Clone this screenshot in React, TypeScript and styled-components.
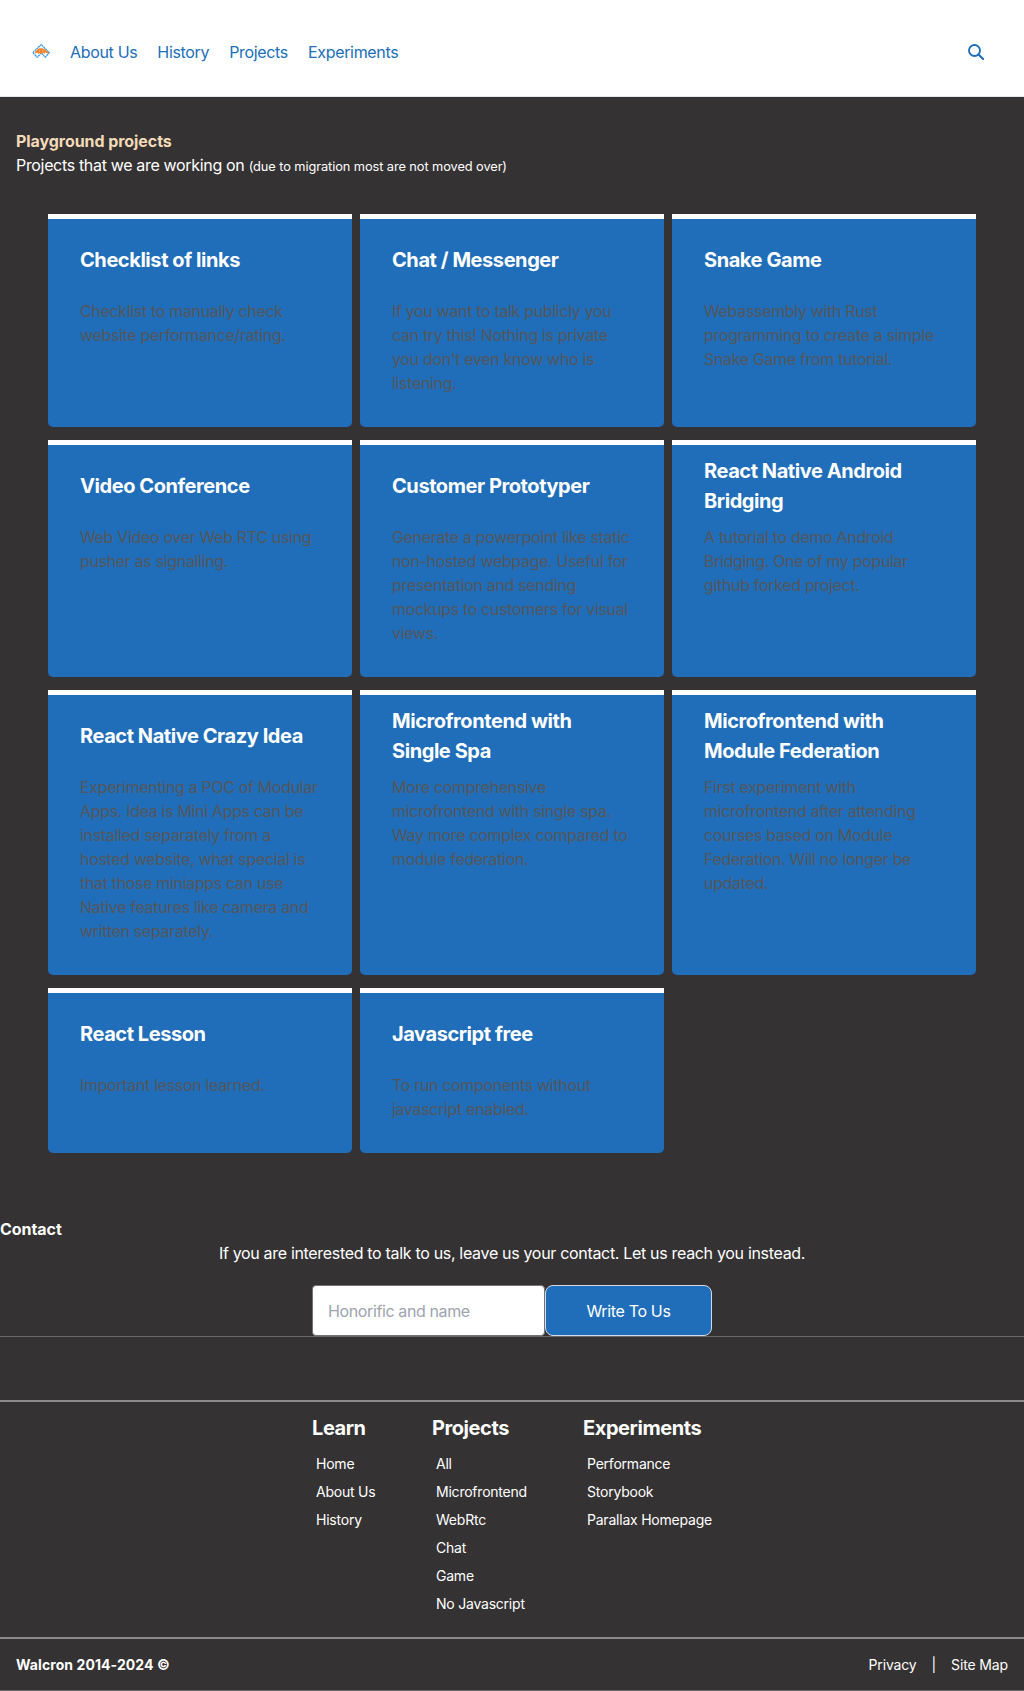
import React from 'react';
import styled, { createGlobalStyle } from 'styled-components';

const blue = '#206eb9';
const dark = '#353233';

const GlobalStyle = createGlobalStyle`
  *, *::before, *::after { box-sizing: border-box; }
  body {
    margin: 0;
    background: ${dark};
    color: #fff;
    font: 400 16px/24px Inter, 'Liberation Sans', sans-serif;
    letter-spacing: -0.33px;
  }
  h1, h2, h3, p, ul { margin: 0; padding: 0; }
  ul { list-style: none; }
  a { color: inherit; text-decoration: none; }
`;

const Header = styled.header`
  display: flex;
  align-items: center;
  justify-content: space-between;
  height: 97px;
  padding: 8px 40px 0 32px;
  background: #fff;
  border-bottom: 1px solid #e2e8ec;
  color: ${blue};
`;

const Nav = styled.nav`
  display: flex;
  align-items: center;
  gap: 20px;
`;

const Logo = styled.svg`
  display: block;
  width: 18px;
  height: 18px;
`;

const SearchButton = styled.button`
  display: flex;
  padding: 0;
  border: 0;
  background: none;
  color: inherit;
`;

const Intro = styled.section`
  padding: 32px 16px 37px;
`;

const IntroTitle = styled.h1`
  font-size: 16px;
  line-height: 24px;
  font-weight: 700;
  letter-spacing: -0.06px;
  color: #f3dab9;
`;

const IntroText = styled.p`
  height: 24px;
`;

const Small = styled.small`
  font-size: 12.8px;
  line-height: 1;
  letter-spacing: -0.08px;
`;

const Grid = styled.section`
  display: grid;
  grid-template-columns: repeat(3, 304px);
  gap: 13px 8px;
  padding: 0 48px;
`;

const Card = styled.article`
  padding: 0 32px 32px;
  border-top: 5px solid #fff;
  border-radius: 0 0 5px 5px;
  background: ${blue};
`;

const CardTitle = styled.h2`
  display: flex;
  align-items: center;
  height: 80px;
  padding-top: 2px;
  font-size: 20px;
  line-height: 30px;
  font-weight: 700;
  letter-spacing: -0.43px;
`;

const CardText = styled.p`
  color: #55565a;
`;

const Line = styled.span`
  display: block;
  white-space: nowrap;
`;

const Contact = styled.section`
  margin-top: 64px;
  border-bottom: 1px solid #6b6869;
`;

const ContactTitle = styled.h2`
  font-size: 16px;
  line-height: 24px;
  font-weight: 700;
  letter-spacing: -0.06px;
`;

const ContactText = styled.p`
  text-align: center;
  letter-spacing: -0.32px;
`;

const Form = styled.form`
  display: flex;
  align-items: flex-start;
  justify-content: center;
  padding-top: 20px;
`;

const NameInput = styled.input`
  width: 233px;
  height: 51px;
  padding: 0 15px;
  border: 1px solid #737375;
  border-radius: 4px;
  background: #fff;
  font: inherit;
  letter-spacing: -0.38px;
  &::placeholder { color: #9da3af; opacity: 1; }
`;

const SubmitButton = styled.button`
  width: 167px;
  height: 51px;
  padding: 0;
  border: 1px solid #d2dce8;
  border-radius: 8px;
  background: ${blue};
  color: #fff;
  font: inherit;
  letter-spacing: -0.34px;
`;

const Footer = styled.footer`
  margin-top: 63px;
  border-top: 2px solid #8c898a;
`;

const Columns = styled.div`
  display: grid;
  grid-template-columns: 120px 151px 132px;
  padding: 11px 0 19px 312px;
`;

const ColumnTitle = styled.h3`
  font-size: 20px;
  line-height: 30px;
  font-weight: 700;
  letter-spacing: -0.43px;
`;

const Links = styled.ul`
  padding: 7px 0 0 4px;
  font-size: 14px;
  line-height: 28px;
  letter-spacing: -0.22px;
`;

const Bottom = styled.div`
  display: flex;
  justify-content: space-between;
  height: 54px;
  padding: 14px 16px 0;
  border-top: 2px solid #8c898a;
  border-bottom: 1px solid #6b6869;
  font-size: 14px;
`;

const Copyright = styled.strong`
  font-weight: 700;
  letter-spacing: 0.08px;
`;

const Legal = styled.div`
  display: flex;
  gap: 15px;
  letter-spacing: -0.14px;
`;

const cards: { title: string[]; text: string[] }[] = [
  { title: ['Checklist of links'], text: ['Checklist to manually check', 'website performance/rating.'] },
  { title: ['Chat / Messenger'], text: ['If you want to talk publicly you', 'can try this! Nothing is private', "you don't even know who is", 'listening.'] },
  { title: ['Snake Game'], text: ['Webassembly with Rust', 'programming to create a simple', 'Snake Game from tutorial.'] },
  { title: ['Video Conference'], text: ['Web Video over Web RTC using', 'pusher as signalling.'] },
  { title: ['Customer Prototyper'], text: ['Generate a powerpoint like static', 'non-hosted webpage. Useful for', 'presentation and sending', 'mockups to customers for visual', 'views.'] },
  { title: ['React Native Android', 'Bridging'], text: ['A tutorial to demo Android', 'Bridging. One of my popular', 'github forked project.'] },
  { title: ['React Native Crazy Idea'], text: ['Experimenting a POC of Modular', 'Apps. Idea is Mini Apps can be', 'installed separately from a', 'hosted website, what special is', 'that those miniapps can use', 'Native features like camera and', 'written separately.'] },
  { title: ['Microfrontend with', 'Single Spa'], text: ['More comprehensive', 'microfrontend with single spa.', 'Way more complex compared to', 'module federation.'] },
  { title: ['Microfrontend with', 'Module Federation'], text: ['First experiment with', 'microfrontend after attending', 'courses based on Module', 'Federation. Will no longer be', 'updated.'] },
  { title: ['React Lesson'], text: ['Important lesson learned.'] },
  { title: ['Javascript free'], text: ['To run components without', 'javascript enabled.'] },
];

const columns = [
  { title: 'Learn', links: ['Home', 'About Us', 'History'] },
  { title: 'Projects', links: ['All', 'Microfrontend', 'WebRtc', 'Chat', 'Game', 'No Javascript'] },
  { title: 'Experiments', links: ['Performance', 'Storybook', 'Parallax Homepage'] },
];

const Lines = ({ items }: { items: string[] }) => (
  <>{items.map((line) => <Line key={line}>{line} </Line>)}</>
);

export default function App() {
  return (
    <>
      <GlobalStyle />
      <Header>
        <Nav>
          <Logo viewBox="0 0 18 18" fill="none">
            <path d="M.8 9.6 9.2 1.6l8 8-3.9 4.7-4.1-4.4-4 4.4L1 9.8" stroke="#369ced" strokeWidth="1.3" strokeDasharray="2 .5" />
            <path d="M2.6 9.4C4.5 7.6 5.4 5.4 8 5.2c2.7-.2 4.2.3 5.4 1.6 1 1 2.3 2.4 4.5 2.9l-3 .5-1.8-1-.8 1.8-1.7-1.4-1.8 1.3-1.2-1-1.5 1.2-.5-1.6-2 1z" fill="#fb8428" />
            <path d="M8 7.3 7.2 9M10.6 6.8l.4 1.6" stroke="#ffe2c6" strokeWidth=".5" />
          </Logo>
          {['About Us', 'History', 'Projects', 'Experiments'].map((item) => <a key={item} href="#">{item}</a>)}
        </Nav>
        <SearchButton aria-label="Search">
          <svg width="16" height="16" viewBox="0 0 16 16" fill="none" stroke="currentColor">
            <circle cx="6.5" cy="6.5" r="5.5" strokeWidth="1.9" />
            <path d="m10.5 10.5 4.6 4.6" strokeWidth="2.1" strokeLinecap="round" />
          </svg>
        </SearchButton>
      </Header>

      <Intro>
        <IntroTitle>Playground projects</IntroTitle>
        <IntroText>Projects that we are working on <Small>(due to migration most are not moved over)</Small></IntroText>
      </Intro>

      <Grid>
        {cards.map((card) => (
          <Card key={card.title.join(' ')}>
            <CardTitle><span><Lines items={card.title} /></span></CardTitle>
            <CardText><Lines items={card.text} /></CardText>
          </Card>
        ))}
      </Grid>

      <Contact>
        <ContactTitle>Contact</ContactTitle>
        <ContactText>If you are interested to talk to us, leave us your contact. Let us reach you instead.</ContactText>
        <Form>
          <NameInput placeholder="Honorific and name" />
          <SubmitButton type="button">Write To Us</SubmitButton>
        </Form>
      </Contact>

      <Footer>
        <Columns>
          {columns.map((column) => (
            <div key={column.title}>
              <ColumnTitle>{column.title}</ColumnTitle>
              <Links>{column.links.map((link) => <li key={link}><a href="#">{link}</a></li>)}</Links>
            </div>
          ))}
        </Columns>
        <Bottom>
          <Copyright>Walcron 2014-2024 ©</Copyright>
          <Legal><a href="#">Privacy</a><span>|</span><a href="#">Site Map</a></Legal>
        </Bottom>
      </Footer>
    </>
  );
}
